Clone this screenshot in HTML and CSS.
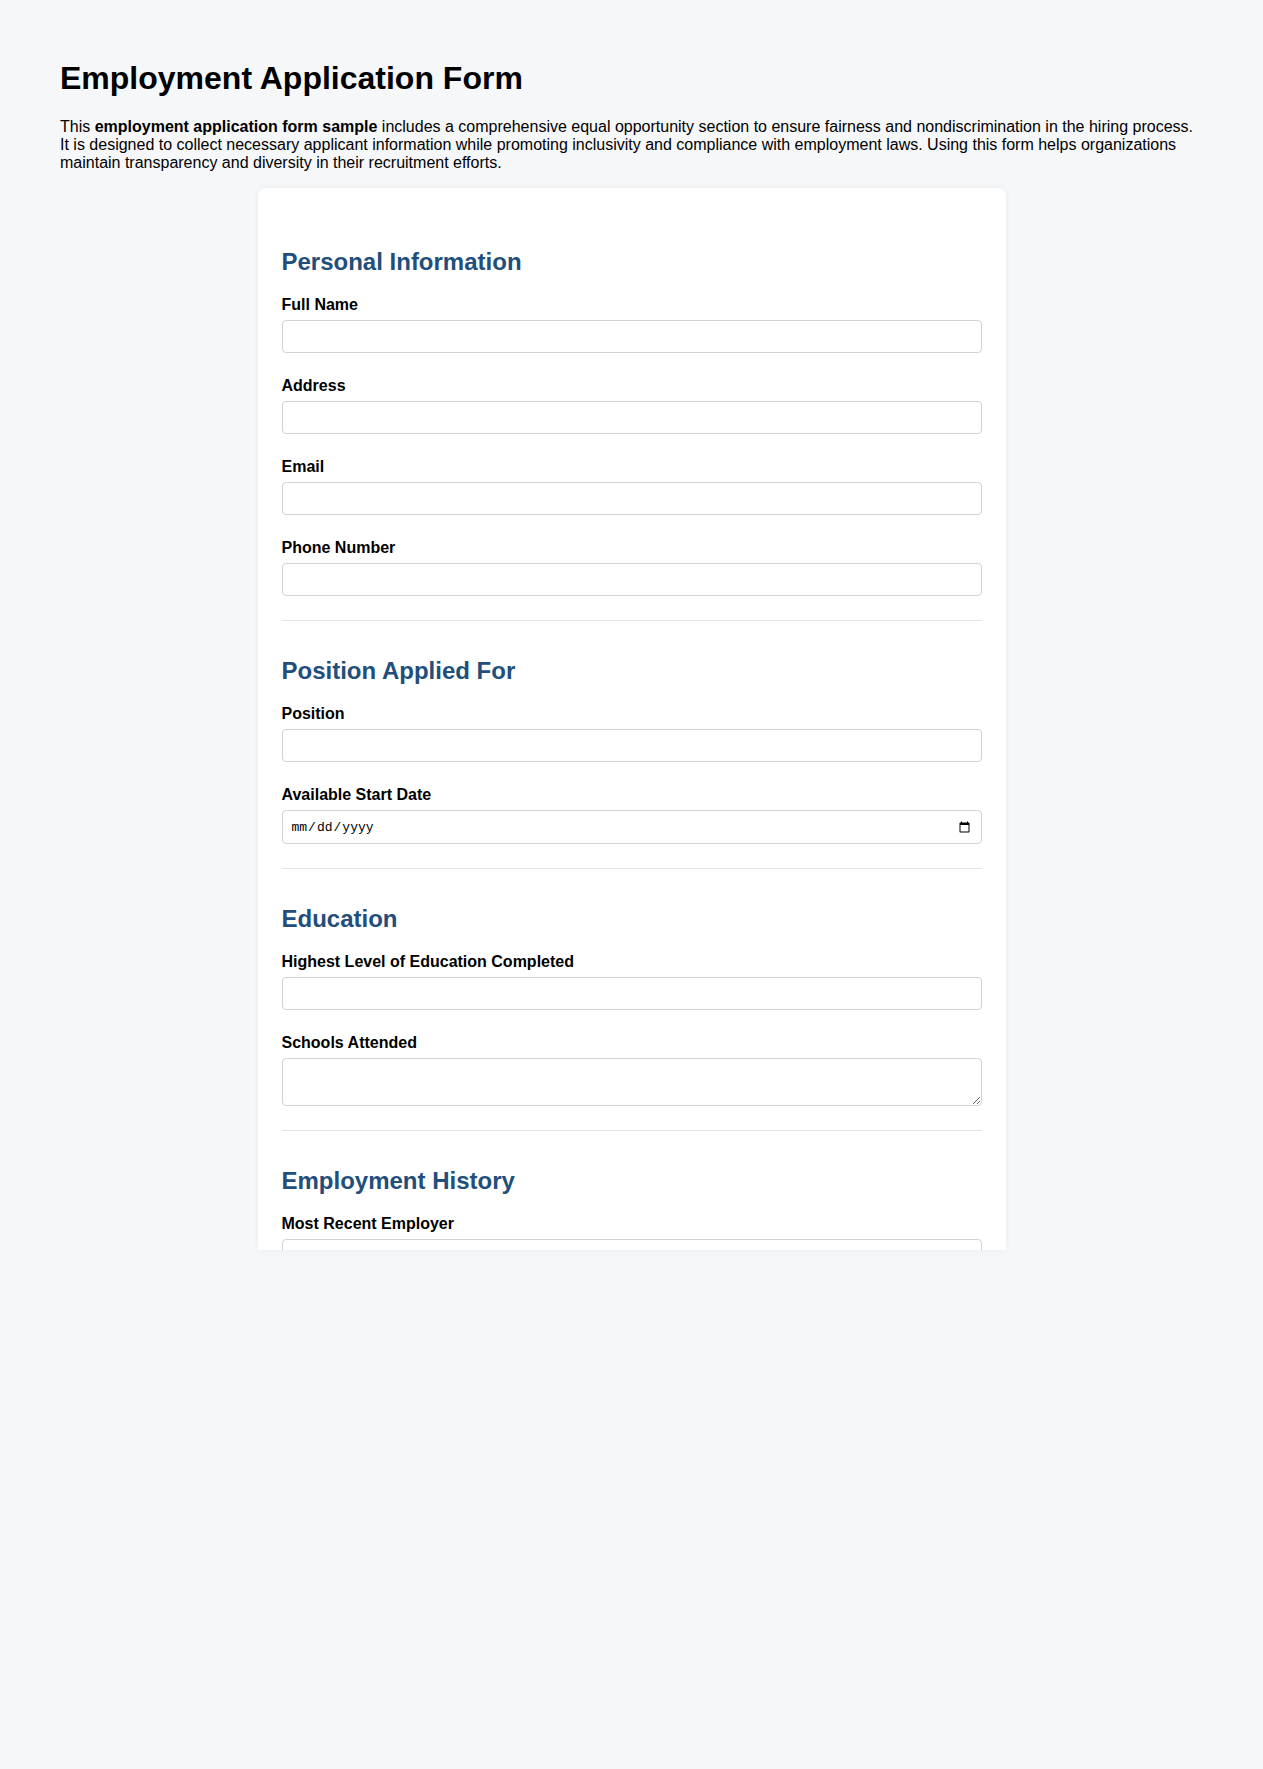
FILE: index.html
```html
<!DOCTYPE html>
<html lang="en">
<head>
<meta charset="utf-8">
<title>Employment Application Form</title>
<link rel="stylesheet" href="styles.css">
</head>
<body>
<h1 class="page-title">Employment Application Form</h1>
<p class="intro">This <strong>employment application form sample</strong> includes a comprehensive equal opportunity section to ensure fairness and nondiscrimination in the hiring process. It is designed to collect necessary applicant information while promoting inclusivity and compliance with employment laws. Using this form helps organizations maintain transparency and diversity in their recruitment efforts.</p>
<form class="card">
  <section class="section">
    <h2 class="section-title">Personal Information</h2>
    <div class="group">
      <label class="label" for="fullname">Full Name</label>
      <input class="field" type="text" id="fullname">
    </div>
    <div class="group">
      <label class="label" for="address">Address</label>
      <input class="field" type="text" id="address">
    </div>
    <div class="group">
      <label class="label" for="email">Email</label>
      <input class="field" type="email" id="email">
    </div>
    <div class="group">
      <label class="label" for="phone">Phone Number</label>
      <input class="field" type="tel" id="phone">
    </div>
  </section>
  <section class="section">
    <h2 class="section-title">Position Applied For</h2>
    <div class="group">
      <label class="label" for="position">Position</label>
      <input class="field" type="text" id="position">
    </div>
    <div class="group">
      <label class="label" for="startdate">Available Start Date</label>
      <input class="field date" type="date" id="startdate">
    </div>
  </section>
  <section class="section">
    <h2 class="section-title">Education</h2>
    <div class="group">
      <label class="label" for="edu">Highest Level of Education Completed</label>
      <input class="field" type="text" id="edu">
    </div>
    <div class="group">
      <label class="label" for="schools">Schools Attended</label>
      <textarea class="field area" id="schools" rows="2"></textarea>
    </div>
  </section>
  <section class="section">
    <h2 class="section-title">Employment History</h2>
    <div class="group">
      <label class="label" for="employer">Most Recent Employer</label>
      <input class="field" type="text" id="employer">
    </div>
    <div class="group">
      <label class="label" for="jobtitle">Job Title</label>
      <input class="field" type="text" id="jobtitle">
    </div>
  </section>
</form>
</body>
</html>
```
FILE: styles.css
```css
html, body {
  background: #f6f7f9;
}
body {
  margin: 0;
  padding: 60px 60px 40px;
  font-family: "Liberation Sans", Arial, sans-serif;
  color: #000;
  min-height: 1769px;
  box-sizing: border-box;
}
.page-title {
  font-size: 32px;
  font-weight: bold;
  margin: 0 0 21px;
}
.intro {
  font-size: 16px;
  margin: 0 0 16px;
  padding-right: 5px;
}
.card {
  display: block;
  width: 748px;
  height: 1062px;
  margin: 0 auto;
  padding: 0 24px;
  box-sizing: border-box;
  background: #fff;
  border-radius: 8px 8px 0 0;
  box-shadow: 0 0 8px rgba(0, 0, 0, 0.05);
  overflow: hidden;
  border-top: 24px solid #fff;
}
.section {
  border-bottom: 1px solid #e2e4e7;
}
.section-title {
  font-size: 24px;
  font-weight: bold;
  color: #224e7b;
  margin: 36px 0 20px;
}
.group {
  margin-bottom: 24px;
}
.label {
  display: block;
  font-size: 16px;
  font-weight: bold;
  margin-bottom: 6px;
}
.field {
  display: block;
  width: 100%;
  box-sizing: border-box;
  height: 33px;
  padding: 8px;
  border: 1px solid #cfd2d6;
  border-radius: 4px;
  background: #fff;
  font-size: 13.33px;
  margin: 0;
}
.date {
  height: 34px;
  font-family: "Liberation Mono", monospace;
  font-size: 13px;
}
.area {
  height: 48px;
  font-family: "Liberation Mono", monospace;
}
```
